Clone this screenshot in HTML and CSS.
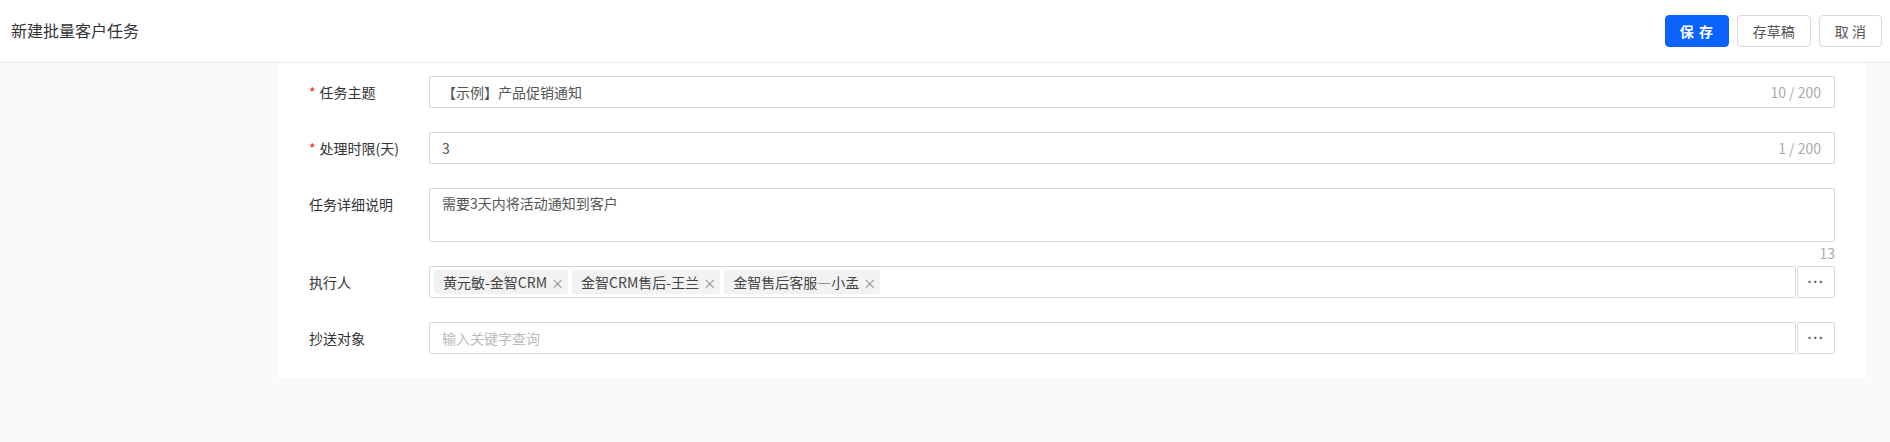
FILE: index.html
```html
<!DOCTYPE html>
<html lang="zh-CN">
<head>
  <meta charset="UTF-8" />
  <title>新建批量客户任务</title>
  <link rel="stylesheet" href="styles.css">
</head>
<body>
  <div class="header">
    <div class="title">新建批量客户任务</div>
    <div class="actions">
      <button class="btn primary">保 存</button>
      <button class="btn">存草稿</button>
      <button class="btn">取 消</button>
    </div>
  </div>
  <div class="main">
    <div class="panel">
      <div class="row">
        <label class="label"><span class="req">*</span>任务主题</label>
        <div class="field input">
          <span class="value">【示例】产品促销通知</span>
          <span class="count">10 / 200</span>
        </div>
      </div>
      <div class="row">
        <label class="label"><span class="req">*</span>处理时限(天)</label>
        <div class="field input">
          <span class="value">3</span>
          <span class="count">1 / 200</span>
        </div>
      </div>
      <div class="row top">
        <label class="label">任务详细说明</label>
        <div class="area-wrap">
          <div class="field textarea">需要3天内将活动通知到客户</div>
          <div class="area-count">13</div>
        </div>
      </div>
      <div class="row tight">
        <label class="label">执行人</label>
        <div class="picker">
          <div class="field tags">
            <span class="tag">黄元敏-金智CRM<i>×</i></span>
            <span class="tag">金智CRM售后-王兰<i>×</i></span>
            <span class="tag">金智售后客服—小孟<i>×</i></span>
          </div>
          <button class="more">···</button>
        </div>
      </div>
      <div class="row">
        <label class="label">抄送对象</label>
        <div class="picker">
          <div class="field input">
            <span class="placeholder">输入关键字查询</span>
          </div>
          <button class="more">···</button>
        </div>
      </div>
    </div>
  </div>
</body>
</html>
```
FILE: styles.css
```css
body, html {
  margin: 0;
  padding: 0;
  height: 100%;
  background: #fafafa;
  font-family: "Noto Sans CJK SC", "Liberation Sans", sans-serif;
  font-size: 14px;
  color: #333;
}
.header {
  height: 62px;
  background: #fff;
  border-bottom: 1px solid #ebebeb;
  display: flex;
  align-items: center;
  justify-content: space-between;
  padding: 0 8px 0 11px;
}
.title {
  font-size: 16px;
  color: #333;
  margin-top: -2px;
}
.actions {
  display: flex;
  gap: 8px;
  margin-top: -1px;
}
.btn {
  height: 32px;
  padding: 0 15px;
  border: 1px solid #d9d9d9;
  border-radius: 4px;
  background: #fff;
  color: #555;
  font-family: inherit;
  font-size: 14px;
  line-height: 30px;
  white-space: nowrap;
}
.btn.primary {
  width: 64px;
  padding: 0;
  background: #0a62ff;
  border-color: #0a62ff;
  color: #fff;
  font-weight: bold;
  letter-spacing: 1px;
}
.main {
  padding: 0 23px 0 277px;
}
.panel {
  background: #fff;
  padding: 13px 32px 24px 32px;
  display: flex;
  flex-direction: column;
  gap: 24px;
}
.row {
  display: flex;
  align-items: center;
}
.row.top {
  align-items: flex-start;
}
.row.tight {
  margin-top: -24px;
}
.label {
  width: 120px;
  color: #333;
}
.top .label {
  padding-top: 6px;
}
.req {
  color: #f5222d;
  margin-right: 4px;
}
.field {
  box-sizing: border-box;
  border: 1px solid #d9d9d9;
  border-radius: 2px;
  background: #fff;
}
.input {
  flex: 1;
  height: 32px;
  display: flex;
  align-items: center;
  justify-content: space-between;
  padding: 0 13px 0 12px;
}
.value {
  color: #555;
}
.count {
  color: #aaa;
  font-size: 14px;
}
.placeholder {
  color: #bbb;
}
.area-wrap {
  flex: 1;
  display: flex;
  flex-direction: column;
}
.textarea {
  height: 54px;
  padding: 4px 12px;
  color: #555;
}
.area-count {
  height: 24px;
  line-height: 22px;
  text-align: right;
  color: #aaa;
  font-size: 14px;
}
.picker {
  flex: 1;
  display: flex;
}
.tags {
  flex: 1;
  height: 32px;
  display: flex;
  align-items: center;
  gap: 4px;
  padding: 0 4px;
}
.tag {
  height: 24px;
  line-height: 24px;
  background: #f2f2f2;
  border-radius: 2px;
  padding: 0 4px 0 9px;
  font-size: 14px;
  color: #444;
}
.tag i {
  font-style: normal;
  color: #888;
  margin-left: 4px;
  font-size: 13px;
}
.more {
  width: 38px;
  height: 32px;
  box-sizing: border-box;
  border: 1px solid #d9d9d9;
  border-radius: 2px;
  background: #fff;
  color: #666;
  font-size: 14px;
  font-weight: bold;
  letter-spacing: 1px;
  padding: 0;
  margin-left: 1px;
}
```
